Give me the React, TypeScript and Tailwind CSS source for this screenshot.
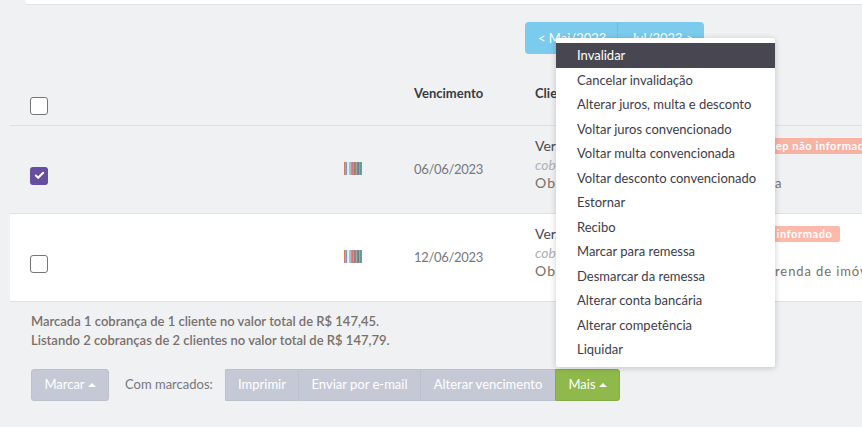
import { Check } from "lucide-react";

const menuItems = [
  "Invalidar",
  "Cancelar invalidação",
  "Alterar juros, multa e desconto",
  "Voltar juros convencionado",
  "Voltar multa convencionada",
  "Voltar desconto convencionado",
  "Estornar",
  "Recibo",
  "Marcar para remessa",
  "Desmarcar da remessa",
  "Alterar conta bancária",
  "Alterar competência",
  "Liquidar",
];

const bars = [
  ["0", "#cf7a62"], ["1.5", "#6f9cc4"], ["3", "#e4e7ea"], ["5", "#dcb84f"], ["6.5", "#7fa4cb"],
  ["8", "#cf7480"], ["9.5", "#94806e"], ["11", "#b97a7a"], ["12.5", "#6f9570"], ["14", "#76769a"], ["15.5", "#5f9e94"], ["17", "#6a94c2"],
];

function Barcode() {
  return (
    <svg width="18" height="13" viewBox="0 0 18 13" className="block">
      {bars.map(([x, c]) => (
        <rect key={x} x={x} y="0" width="1.5" height="13" fill={c} />
      ))}
    </svg>
  );
}

function Box({ checked }: { checked?: boolean }) {
  if (checked) {
    return (
      <div className="w-[18px] h-[18px] rounded-[3px] bg-[#674ea0] flex items-center justify-center pb-[2px]">
        <Check size={11} strokeWidth={4.5} color="#ffffff" />
      </div>
    );
  }
  return <div className="w-[18px] h-[18px] rounded-[3px] bg-white border border-[#767676]" />;
}

function Row(props: {
  date: string;
  checked?: boolean;
  white?: boolean;
  nameWidth: string;
  badgeBg: string;
  obs: string;
}) {
  return (
    <div
      className={`grid grid-cols-[334px_70px_121px_1fr] h-[88px] border-b border-[#dfe0e3] overflow-hidden ${props.white ? "bg-white" : ""}`}
    >
      <div className="pl-[20px] pt-[41px]">
        <Box checked={props.checked} />
      </div>
      <div className="pt-[36px]">
        <Barcode />
      </div>
      <div className="pt-[34px] text-[13px] leading-[18px] tracking-[-0.3px] text-[#77777f]">{props.date}</div>
      <div className="pt-[11px] text-[14px] leading-[18.5px] whitespace-nowrap">
        <div className="flex items-center text-[#4a4a52]">
          <span className={props.nameWidth}>Vera Lucia</span>
          <span
            className={`${props.badgeBg} h-[16px] rounded-[2px] px-[8px] text-[11px] leading-[16px] font-bold tracking-[0.6px] text-white shrink-0`}
          >
            Cep não informado
          </span>
        </div>
        <div className="italic text-[#b0b0b5]">cobrança</div>
        <div className="flex text-[#77706c]">
          <span className="w-[240px] shrink-0 tracking-[1.2px]">Obs</span>
          <span className="text-[13px] tracking-[0.9px]">{props.obs}</span>
        </div>
      </div>
    </div>
  );
}

export default function App() {
  return (
    <div className="relative w-[862px] h-[427px] overflow-hidden bg-[#f0f1f3] font-['Lato',sans-serif]">
      <div className="ml-[25px] h-[5px] bg-white border-b border-[#e3e4e6] rounded-bl-[4px]" />

      <div className="mt-[17px] ml-[525px] flex w-[179px] h-[32px] rounded-[4px] bg-[#7bcbef] text-white text-[13px] leading-[32px]">
        <div className="w-[93px] pl-[13px] border-r border-[#6dbde2]">&lt; Mai/2023</div>
        <div className="pl-[13px]">Jul/2023 &gt;</div>
      </div>

      <div className="ml-[10px]">
        <div className="grid grid-cols-[404px_121px_1fr] h-[72px] border-b border-[#dfe0e3]">
          <div className="pl-[20px] pt-[43px]">
            <Box />
          </div>
          <div className="pt-[30px] text-[13px] leading-[18px] font-bold text-[#3a3a42]">Vencimento</div>
          <div className="pt-[30px] text-[13px] leading-[18px] font-bold text-[#3a3a42]">Cliente</div>
        </div>
        <Row date="06/06/2023" checked nameWidth="w-[225px] shrink-0" badgeBg="bg-[#f8b3a5]" obs="a" />
        <Row date="12/06/2023" white nameWidth="w-[186px] shrink-0" badgeBg="bg-[#ffb9ab]" obs="renda de imóvel" />
      </div>

      <div className="ml-[31px] mt-[10px] text-[13px] leading-[19px] font-semibold text-[#77706c]">
        <p>Marcada 1 cobrança de 1 cliente no valor total de R$ 147,45.</p>
        <p>Listando 2 cobranças de 2 clientes no valor total de R$ 147,79.</p>
      </div>

      <div className="ml-[31px] mt-[19px] flex items-center text-[13px] text-white h-[32px]">
        <button className="w-[78px] h-[32px] rounded-[3px] bg-[#c5c9d6] border border-[#bbc0ce] flex items-center justify-center gap-[3px]">
          Marcar <span className="w-0 h-0 border-x-[4px] border-x-transparent border-b-[4px] border-b-white" />
        </button>
        <span className="ml-[16px] w-[100px] text-[#77777f]">Com marcados:</span>
        <button className="w-[74px] h-[32px] bg-[#c5c9d6] border border-[#bbc0ce] rounded-l-[1px]">Imprimir</button>
        <button className="w-[122px] h-[32px] bg-[#c5c9d6] border-y border-r border-[#bbc0ce]">Enviar por e-mail</button>
        <button className="w-[134px] h-[32px] bg-[#c5c9d6] border-y border-[#bbc0ce]">Alterar vencimento</button>
        <button className="w-[65px] h-[32px] rounded-r-[3px] bg-[#8fb94b] border border-[#84ad43] flex items-center justify-center gap-[3px]">
          Mais <span className="w-0 h-0 border-x-[4px] border-x-transparent border-b-[4px] border-b-white" />
        </button>
      </div>

      <div className="absolute left-[556px] top-[38px] w-[219px] h-[329px] pt-[5px] bg-white rounded-[2px] shadow-[0_1px_6px_rgba(0,0,0,0.2)]">
        {menuItems.map((item, i) => (
          <div
            key={item}
            className={`h-[24.5px] pl-[21px] text-[13px] leading-[24.5px] whitespace-nowrap ${i === 0 ? "bg-[#484751] text-white" : "text-[#3d3c4a]"}`}
          >
            {item}
          </div>
        ))}
      </div>
    </div>
  );
}
